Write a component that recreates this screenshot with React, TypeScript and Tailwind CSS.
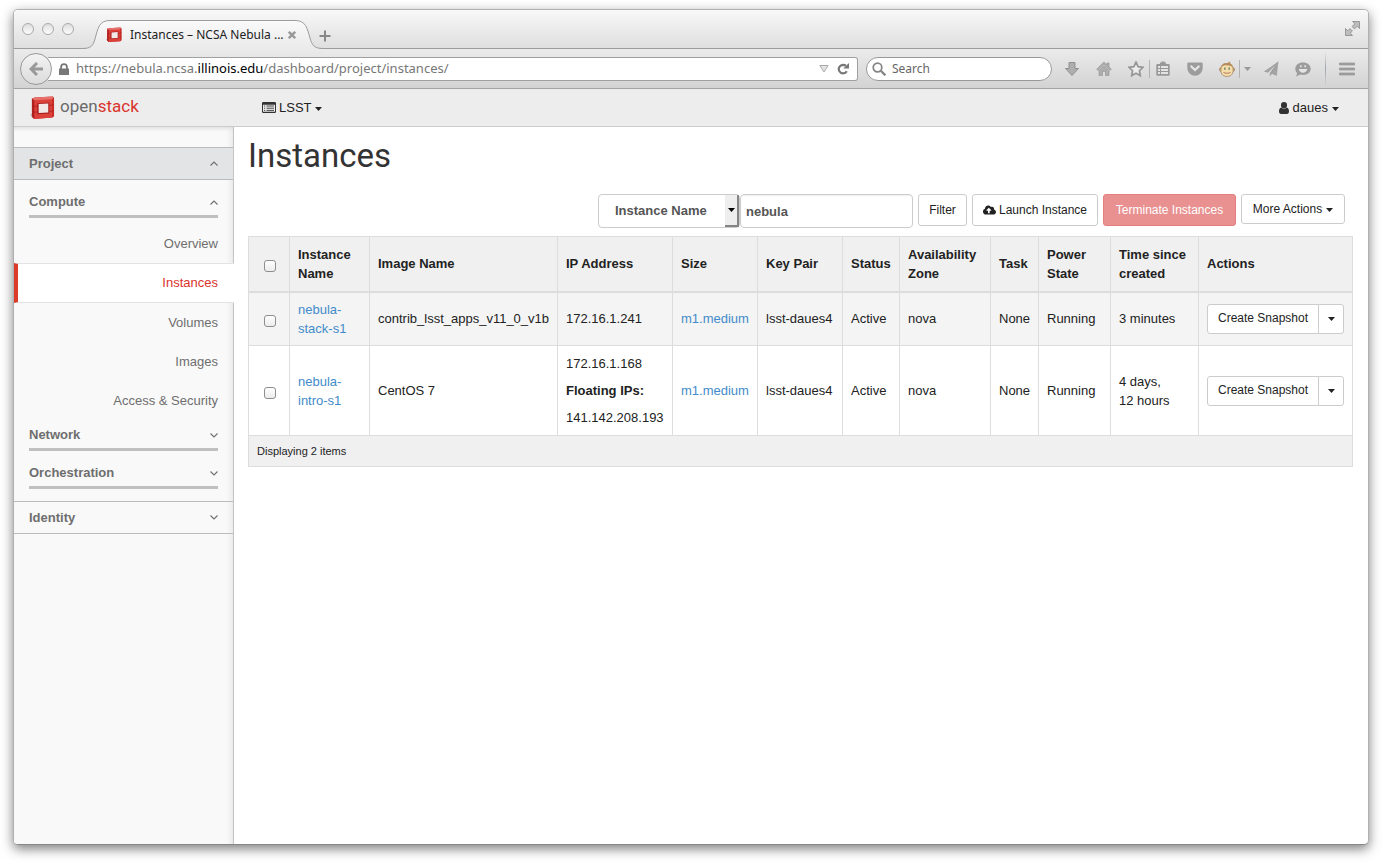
import React, { useState } from "react";
import { FaCloudUploadAlt } from "react-icons/fa";

const uiFont = "font-['Noto_Sans','Open_Sans',sans-serif]";

function Caret({ className = "" }: { className?: string }) {
  return (
    <svg aria-hidden="true" viewBox="0 0 7 4" className={`h-1 w-[7px] ${className}`}>
      <path d="M0 0h7L3.500 4z" fill="currentColor" />
    </svg>
  );
}

function Chevron({ up = false }: { up?: boolean }) {
  return (
    <svg aria-hidden="true" viewBox="0 0 8 5" className="h-[5px] w-2 shrink-0" fill="none" stroke="#6e6e6e" strokeWidth="1.100">
      <path d={up ? "M.5 4.500L4 1l3.500 3.500" : "M.5.5L4 4 7.500.5"} />
    </svg>
  );
}

function Cube({ className }: { className: string }) {
  return (
    <svg aria-hidden="true" viewBox="0 0 26 25" className={className}>
      <path d="M0 19l4-1v4l-2 .5z" fill="#c4bebe" />
      <path d="M2 2.500L5 1.500 23.500.5l1.500 1V21l-2 1.500-19 1.500-2-2.500z" fill="#c22a25" />
      <path d="M2 2.500l3 1v20l-3-2z" fill="#b0211e" />
      <path d="M4.500 3.500L23 2.500v20L4.500 24z" fill="#dc403a" />
      <path d="M2 2.500L5 1.500 23.500.5l1.500 1-2 2L4.500 4.500z" fill="#e8706a" />
      <path d="M23 3l2-1.500V21l-2 1.500z" fill="#cb2e29" />
      <path d="M2 10l2.500.8 4-.2M19.500 9.800l3.500-.2 2-.8M2 16l2.500.8 4-.2M19.500 16l3.500-.2 2-.8" fill="none" stroke="#a9201c" strokeWidth=".8" />
      <path d="M7.500 7.500L20 6.800v11.400l-12.500.8z" fill="#a81e1b" />
      <path d="M9 8.300l10-.5v9.400l-10 .6z" fill="#f1e8e7" />
    </svg>
  );
}

const glyph = "h-4 w-4 shrink-0 fill-[#aeaeae] stroke-[#8f8f8f]";

function ToolButton({ label, children, className = "" }: { label: string; children: React.ReactNode; className?: string }) {
  return (
    <button type="button" aria-label={label} className={`flex shrink-0 items-center justify-center ${className}`}>
      {children}
    </button>
  );
}

function Separator() {
  return <span className="h-[18px] w-px bg-[#b2b2b2]" />;
}

function TitleBar() {
  return (
    <div className="flex h-[39px] items-end border-b border-[#9c9c9c] bg-gradient-to-b from-[#f8f8f8] to-[#dfdfdf]">
      <div className="flex items-center gap-2 self-start pt-[13px] pl-2">
        {["Close", "Minimize", "Zoom"].map((l) => (
          <button key={l} type="button" aria-label={l} className="h-3 w-3 rounded-full border border-[#aaa] bg-gradient-to-b from-[#dedede] to-[#fdfdfd]" />
        ))}
      </div>
      <div className="relative -mb-px ml-2 flex h-[29px] w-[244px] items-center pr-[30px] pl-6">
        <svg aria-hidden="true" viewBox="0 0 244 29" className="absolute inset-0 h-full w-full">
          <defs>
            <linearGradient id="tab" x1="0" y1="0" x2="0" y2="1">
              <stop offset="0" stopColor="#fafafa" />
              <stop offset="1" stopColor="#eaeaea" />
            </linearGradient>
          </defs>
          <path d="M0 28.500C9 28.500 11 26 13 19C16 8 17 .5 28 .5H213C224 .5 225 8 228 18C230 25 232 28.500 241 28.500V29H0z" fill="url(#tab)" />
          <path d="M0 28.500C9 28.500 11 26 13 19C16 8 17 .5 28 .5H213C224 .5 225 8 228 18C230 25 232 28.500 241 28.500H244" fill="none" stroke="#9c9c9c" />
        </svg>
        <Cube className="relative h-4 w-4 shrink-0" />
        <span className={`relative ml-2 min-w-0 grow text-[12px] whitespace-nowrap text-[#222] ${uiFont}`}>Instances – NCSA Nebula ...</span>
        <button type="button" aria-label="Close tab" className="relative">
          <svg viewBox="0 0 8 8" className="h-2 w-2" stroke="#999" strokeWidth="2.400">
            <path d="M.8.8l6.400 6.400M7.200.8L.8 7.200" />
          </svg>
        </button>
      </div>
      <button type="button" aria-label="New tab" className="mb-1.5 -ml-[7px]">
        <svg viewBox="0 0 12 12" className="h-3 w-3" stroke="#888" strokeWidth="2">
          <path d="M6 .5v11M.5 6h11" />
        </svg>
      </button>
      <button type="button" aria-label="Enter full screen" className="mr-2 ml-auto self-start pt-[11px]">
        <svg viewBox="0 0 15 15" className="h-[15px] w-[15px]" fill="#bdbdbd" stroke="#929292" strokeWidth=".9">
          <path d="M7.500.5h7v7l-2.300-2.300-2.700 2.700-2.400-2.400 2.700-2.700zM.5 7.500l2.300 2.300 2.200-2.200 2.400 2.400-2.200 2.200 2.300 2.300h-7z" />
        </svg>
      </button>
    </div>
  );
}

function NavBar() {
  return (
    <div className="flex h-10 items-center border-b border-[#a3a3a3] bg-gradient-to-b from-[#ebebeb] to-[#d3d3d3] pr-[13px] pl-1.5">
      <button type="button" aria-label="Back" className="relative flex h-8 w-8 shrink-0 items-center justify-center rounded-full border border-[#999] bg-gradient-to-b from-[#f3f3f3] to-[#dcdcdc]">
        <svg viewBox="0 0 14 14" className="h-[14px] w-[14px]" fill="none" stroke="#999" strokeWidth="3">
          <path d="M14 7H3M8 1L2 7l6 6" />
        </svg>
      </button>
      <div className="-ml-1 flex h-6 min-w-0 grow items-center rounded-r-[3px] border border-l-0 border-[#a0a0a0] bg-white pr-2 pl-[11px]">
        <svg aria-hidden="true" viewBox="0 0 10 12" className="h-3 w-2.5 shrink-0 fill-[#777]">
          <path d="M0 5.500h1.200V4a3.800 3.800 0 017.600 0v1.500H10V12H0zM3 5.500h4V4a2 2 0 00-4 0z" />
        </svg>
        <span className={`ml-[7px] min-w-0 grow truncate text-[13px] text-[#777] ${uiFont}`}>
          https://nebula.ncsa.<span className="text-black">illinois.edu</span>/dashboard/project/instances/
        </span>
        <ToolButton label="History" className="mr-2">
          <svg viewBox="0 0 10 8" className="h-2 w-2.5" fill="#e3e3e3" stroke="#aaa">
            <path d="M.8.500h8.400L5 7z" />
          </svg>
        </ToolButton>
        <ToolButton label="Reload">
          <svg viewBox="0 0 12 12" className="h-3 w-3">
            <path d="M9.800 8.300A4.300 4.300 0 116 1.800c1.300 0 2.300.4 3 1.100" fill="none" stroke="#777" strokeWidth="2.200" />
            <path d="M12 0v5.600H6.300z" fill="#777" />
          </svg>
        </ToolButton>
      </div>
      <label className="ml-2 flex h-6 w-[186px] shrink-0 items-center rounded-full border border-[#999] bg-white pr-3 pl-[5px]">
        <svg aria-hidden="true" viewBox="0 0 14 14" className="h-[14px] w-[14px] shrink-0" fill="none" stroke="#858585">
          <circle cx="5.500" cy="5.500" r="4.300" strokeWidth="1.700" />
          <path d="M8.800 8.800l4.500 4.500" strokeWidth="2.300" />
        </svg>
        <input aria-label="Search" placeholder="Search" className={`ml-1.5 min-w-0 grow bg-transparent text-[12px] text-[#555] outline-none placeholder:text-[#666] ${uiFont}`} />
      </label>
      <div className="ml-3 flex shrink-0 items-center gap-4">
        <ToolButton label="Downloads">
          <svg viewBox="0 0 16 16" className={glyph}><path d="M5 1.500h6v6h3.500L8 14.500 1.500 7.500H5z" /></svg>
        </ToolButton>
        <ToolButton label="Home">
          <svg viewBox="0 0 16 16" className={glyph}>
            <path d="M8 1L.7 8.200l1.200 1.200L8 3.600l6.100 5.800 1.200-1.200L13 6V2h-2v2z" strokeWidth=".6" />
            <path d="M3 9.700V14.600h3.500v-4.200h3v4.200H13V9.700L8 5z" strokeWidth=".6" />
          </svg>
        </ToolButton>
        <div className="flex items-center gap-[5px]">
          <ToolButton label="Bookmark this page">
            <svg viewBox="0 0 16 16" className="h-4 w-4 shrink-0 fill-[#ededed] stroke-[#989898]"><path d="M8 1.200l2.100 4.500 4.900.6-3.600 3.400.9 4.900L8 12.200l-4.300 2.400.9-4.900L1 6.300l4.900-.6z" strokeWidth="1.800" /></svg>
          </ToolButton>
          <Separator />
          <ToolButton label="Bookmarks">
            <svg viewBox="0 0 16 16" className="h-4 w-4 shrink-0">
              <path d="M2.500 3H5V1.500h1.500V.5h3v1H11V3h2.500a1.200 1.200 0 011.200 1.200v9.400a1.200 1.200 0 01-1.200 1.200h-11a1.200 1.200 0 01-1.200-1.200V4.200A1.200 1.200 0 012.500 3z" fill="#989898" />
              <path d="M3 5h2v2H3zm3 0h7v2H6zM3 8h2v2H3zm3 0h7v2H6zM3 11h2v2H3zm3 0h7v2H6z" fill="#e3e3e3" />
            </svg>
          </ToolButton>
        </div>
        <ToolButton label="Save to Pocket">
          <svg viewBox="0 0 16 16" className="h-4 w-4 shrink-0">
            <path d="M1.500 1.500h13a1.200 1.200 0 011.200 1.200V7A7.700 7.700 0 01.3 7V2.700a1.200 1.200 0 011.200-1.200z" fill="#9c9c9c" />
            <path d="M4.300 5.500L8 9l3.700-3.500" fill="none" stroke="#e6e6e6" strokeWidth="2.200" strokeLinecap="round" />
          </svg>
        </ToolButton>
        <div className="flex items-center gap-1">
          <ToolButton label="Greasemonkey">
            <svg viewBox="0 0 16 16" className="h-4 w-4 shrink-0">
              <circle cx="1.900" cy="8.500" r="1.600" fill="#e2b679" stroke="#8b6a46" strokeWidth=".6" />
              <circle cx="14.100" cy="8.500" r="1.600" fill="#e2b679" stroke="#8b6a46" strokeWidth=".6" />
              <path d="M2 8C2 4 4 2.500 8 2.500S14 4 14 8c.8 4-1.500 7.500-6 7.500S1.200 12 2 8z" fill="#f5dcab" stroke="#8b6a46" strokeWidth=".6" />
              <path d="M2.300 6.500C2.500 3.500 5 2.200 8 2.200L11.500.3l-.8 2C12.500 3.200 13.500 4.500 13.700 6.500 12 4.200 9 4.800 8 4.300 6.500 4.200 4 4.200 2.300 6.500z" fill="#b58c5c" />
              <path d="M5.300 6.500h1.200v2.300H5.300zm4.200 0h1.200v2.300H9.500z" fill="#4f7458" />
              <path d="M4.500 11.500c2 1 5 1 7 0" fill="none" stroke="#a8604c" strokeWidth=".8" />
            </svg>
          </ToolButton>
          <Separator />
          <ToolButton label="Greasemonkey menu">
            <Caret className="text-[#999]" />
          </ToolButton>
        </div>
        <ToolButton label="Share this page" className="-ml-1">
          <svg viewBox="0 0 16 16" className="h-4 w-4 shrink-0 fill-[#a4a4a4]">
            <path d="M15 .8L.8 10.500 5 11.800 12.500 4 6.800 12.300v3.200l2-2.400z" />
            <path d="M15 .8L8 12l5.500 2.500z" stroke="#929292" strokeWidth=".5" />
          </svg>
        </ToolButton>
        <ToolButton label="Chat">
          <svg viewBox="0 0 16 16" className="h-4 w-4 shrink-0">
            <path d="M8 1.500c4.500 0 7.700 2.700 7.700 6.300S12.500 14 8 14c-1 0-1.900-.1-2.700-.4L1 15.500l1.200-3.300C1 11 .3 9.500.3 7.800.3 4.200 3.500 1.500 8 1.500z" fill="#9c9c9c" />
            <path d="M3.800 8h8.400C11.500 13 4.500 13 3.800 8zM5 4.300h1.600v2H5zm4.400 0H11v2H9.400z" fill="#e4e4e4" />
          </svg>
        </ToolButton>
        <div className="-ml-0.5 flex items-center gap-[13px]">
          <span className="h-9 w-px bg-gradient-to-b from-transparent via-[#a0a6ad] to-transparent" />
          <ToolButton label="Open menu">
            <svg viewBox="0 0 16 14" className="h-[14px] w-4" fill="#a3a3a3" stroke="#8c8c8c" strokeWidth=".6">
              <path d="M.5 1h15v2H.5zM.5 6h15v2H.5zM.5 11h15v2H.5z" />
            </svg>
          </ToolButton>
        </div>
      </div>
    </div>
  );
}

function SiteHeader() {
  return (
    <header className="flex h-[38px] items-center border-b border-[#ccc] bg-[#ededed] pr-[29px] pl-4 text-[13px] text-[#333]">
      <a href="#home" className="flex w-[232px] shrink-0 items-center gap-[5px]">
        <Cube className="h-6 w-[25px]" />
        <span className="pb-1 font-['Roboto',sans-serif] text-[17px] leading-6 text-[#6a6a6a]">
          open<span className="text-[#d9352c]">stack</span>
        </span>
      </a>
      <button type="button" className="flex items-center text-[#222]">
        <svg aria-hidden="true" viewBox="0 0 14 11" className="mr-[3px] h-[11px] w-[14px]">
          <path d="M1.200 0h11.600A1.200 1.200 0 0114 1.200v8.600a1.200 1.200 0 01-1.200 1.200H1.200A1.200 1.200 0 010 9.800V1.200A1.200 1.200 0 011.200 0zM1 2.800v7h12v-7z" fill="#333" fillRule="evenodd" />
          <path d="M2 4h1.200M2 6.200h1.200M2 8.400h1.200M4.500 4H12M4.500 6.200H12M4.500 8.400H12" stroke="#333" strokeWidth=".9" />
        </svg>
        LSST
        <Caret className="mt-[3px] ml-[3px]" />
      </button>
      <button type="button" className="ml-auto flex items-center text-[#222]">
        <svg aria-hidden="true" viewBox="0 0 10 12" className="mr-1 h-3 w-2.5 fill-[#333]">
          <path d="M5 0a3 3 0 013 3.200A3 3 0 015 6.400a3 3 0 01-3-3.200A3 3 0 015 0zM2.300 5.600C3 6.500 4 7 5 7s2-.5 2.700-1.400C9.300 5.800 10 7.500 10 9.800 10 11 9.200 12 8 12H2C.8 12 0 11 0 9.800 0 7.500.7 5.800 2.300 5.600z" />
        </svg>
        daues
        <Caret className="mt-[3px] ml-1" />
      </button>
    </header>
  );
}

const barButton = "flex w-full items-center justify-between px-[15px] font-bold";

function GroupHeading({ label, open = false }: { label: string; open?: boolean }) {
  return (
    <div className="px-[15px] py-1.5">
      <button type="button" aria-expanded={open} className="flex w-full items-center justify-between border-b-[3px] border-[#c0c0c0] pb-1 leading-[18px] font-bold">
        {label}
        <Chevron up={open} />
      </button>
    </div>
  );
}

function Sidebar() {
  const links = ["Overview", "Instances", "Volumes", "Images", "Access & Security"];
  return (
    <aside className="w-[220px] shrink-0 border-r border-[#c4c4c4] bg-[#f9f9f9] bg-gradient-to-r from-[#f9f9f9] from-97% to-[#ececec] pt-5 text-[13px] text-[#6e6e6e] shadow-[inset_0_4px_4px_-3px_#d8d8d8]">
      <button type="button" aria-expanded="true" className={`${barButton} h-[33px] border-y border-[#bbb] bg-[#e2e4e6]`}>
        Project
        <Chevron up />
      </button>
      <div className="pt-[7px] pb-1.5">
        <GroupHeading label="Compute" open />
        <nav aria-label="Compute">
          {links.map((l) =>
            l === "Instances" ? (
              <a key={l} href="#instances" aria-current="page" className="relative -mr-px flex h-10 items-center justify-end border-y border-l-4 border-y-[#e3e3e3] border-l-[#dd3b2a] bg-white pr-4 text-[#d9342b]">
                {l}
              </a>
            ) : (
              <a key={l} href="#section" className="flex h-[39px] items-center justify-end pr-[15px]">
                {l}
              </a>
            ),
          )}
        </nav>
        <div className="flex flex-col gap-px">
          <GroupHeading label="Network" />
          <GroupHeading label="Orchestration" />
        </div>
      </div>
      <button type="button" aria-expanded="false" className={`${barButton} h-[33px] border-y border-[#bbb]`}>
        Identity
        <Chevron />
      </button>
    </aside>
  );
}

const btn = "flex items-center justify-center rounded-[3px] border border-[#ccc] bg-white text-[12px] text-[#222] whitespace-nowrap";

function Toolbar() {
  const [query, setQuery] = useState("nebula");
  return (
    <form className="mt-[17px] flex items-start justify-end gap-[5px] pr-2" onSubmit={(e) => e.preventDefault()}>
      <div className="flex">
        <div className="relative">
          <select aria-label="Filter field" className="h-[34px] w-[142px] appearance-none rounded-[4px] border border-[#ccc] bg-white pl-4 text-[13px] font-bold text-[#555]">
            <option>Instance Name</option>
          </select>
          <span className="pointer-events-none absolute inset-y-px right-px flex w-[14px] items-center justify-center border-r-2 border-b-2 border-[#858585] bg-[#eee]">
            <Caret className="text-black" />
          </span>
        </div>
        <input aria-label="Filter value" value={query} onChange={(e) => setQuery(e.target.value)} className="h-[34px] w-[173px] rounded-[4px] border border-[#ccc] bg-white px-[5px] text-[13px] font-bold text-[#555] shadow-[inset_0_1px_1px_#0001]" />
      </div>
      <button type="submit" className={`${btn} h-8 w-[49px]`}>Filter</button>
      <button type="button" className={`${btn} h-8 w-[126px] gap-[3px]`}>
        <FaCloudUploadAlt className="h-[14px] w-[13px]" />
        Launch Instance
      </button>
      <button type="button" disabled className="flex h-8 w-[133px] items-center justify-center rounded-[3px] border border-[#e47f7e] bg-[#e99190] text-[12px] text-white">
        Terminate Instances
      </button>
      <button type="button" className={`${btn} h-[30px] w-[104px] gap-1`}>
        More Actions
        <Caret className="mt-0.5" />
      </button>
    </form>
  );
}

function Check({ label }: { label: string }) {
  return (
    <input type="checkbox" aria-label={label} className="mt-1 ml-[7px] block h-3 w-3 appearance-none rounded-[3px] border border-[#8e8e8e] bg-gradient-to-b from-[#fff] to-[#ececec] checked:bg-[#428bca]" />
  );
}

const columns = [
  { name: "Instance Name", w: "w-20" },
  { name: "Image Name", w: "w-[188px]" },
  { name: "IP Address", w: "w-[115px]" },
  { name: "Size", w: "w-[85px]" },
  { name: "Key Pair", w: "w-[85px]" },
  { name: "Status", w: "w-[57px]" },
  { name: "Availability Zone", w: "w-[91px]" },
  { name: "Task", w: "w-12" },
  { name: "Power State", w: "w-[72px]" },
  { name: "Time since created", w: "w-[88px]" },
  { name: "Actions", w: "" },
];

const rows = [
  { name: "nebula-stack-s1", image: "contrib_lsst_apps_v11_0_v1b", ip: "172.16.1.241", floating: "", time: "3 minutes", style: "h-[54px] bg-[#f4f4f4]" },
  { name: "nebula-intro-s1", image: "CentOS 7", ip: "172.16.1.168", floating: "141.142.208.193", time: "4 days, 12\u00a0hours", style: "h-[90px] bg-white" },
];

const cell = "border border-[#ddd] px-2";

function InstanceTable() {
  return (
    <table className="mt-2 w-full table-fixed border-collapse border border-[#ddd] text-left text-[13px] leading-[19px] text-[#222]">
      <thead>
        <tr className="h-[55px] border-b-2 border-[#ddd] bg-[#f0f0f0]">
          <th className={`${cell} w-[41px]`}><Check label="Select all instances" /></th>
          {columns.map((c) => (
            <th key={c.name} className={`${cell} ${c.w}`}>{c.name}</th>
          ))}
        </tr>
      </thead>
      <tbody>
        {rows.map((r) => (
          <tr key={r.name} className={r.style}>
            <td className={cell}><Check label={`Select ${r.name}`} /></td>
            <td className={cell}><a href="#instance" className="text-[#428bca]">{r.name}</a></td>
            <td className={`${cell} whitespace-nowrap`}>{r.image}</td>
            <td className={`${cell} whitespace-nowrap`}>
              <div className="flex flex-col gap-2">
                <span>{r.ip}</span>
                {r.floating && <b>Floating IPs:</b>}
                {r.floating && <span>{r.floating}</span>}
              </div>
            </td>
            <td className={cell}><a href="#flavor" className="text-[#428bca]">m1.medium</a></td>
            <td className={`${cell} whitespace-nowrap`}>lsst-daues4</td>
            <td className={cell}>Active</td>
            <td className={cell}>nova</td>
            <td className={cell}>None</td>
            <td className={cell}>Running</td>
            <td className={cell}>{r.time}</td>
            <td className={cell}>
              <div className="flex">
                <button type="button" className={`${btn} h-[30px] w-28 rounded-r-none`}>Create Snapshot</button>
                <button type="button" aria-label="More instance actions" className={`${btn} -ml-px h-[30px] w-[26px] rounded-l-none`}>
                  <Caret />
                </button>
              </div>
            </td>
          </tr>
        ))}
      </tbody>
      <tfoot>
        <tr className="h-[31px] bg-[#f0f0f0] text-[11px]">
          <td colSpan={12} className={cell}>Displaying 2 items</td>
        </tr>
      </tfoot>
    </table>
  );
}

export default function App() {
  return (
    <div className="flex min-h-screen flex-col bg-white px-[13px] pt-[9px] pb-[19px] font-['Liberation_Sans',Arial,sans-serif]">
      <div className="flex grow flex-col overflow-hidden rounded-[5px] border border-[#b0b0b0] border-b-[#888] bg-white shadow-[0_4px_12px_#00000080]">
        <TitleBar />
        <NavBar />
        <SiteHeader />
        <div className="flex grow">
          <Sidebar />
          <main className="min-w-0 grow pt-2 pr-[15px] pl-[14px]">
            <h1 className="font-['Roboto',sans-serif] text-[33px] leading-[42px] text-[#333]">Instances</h1>
            <Toolbar />
            <InstanceTable />
          </main>
        </div>
      </div>
    </div>
  );
}
